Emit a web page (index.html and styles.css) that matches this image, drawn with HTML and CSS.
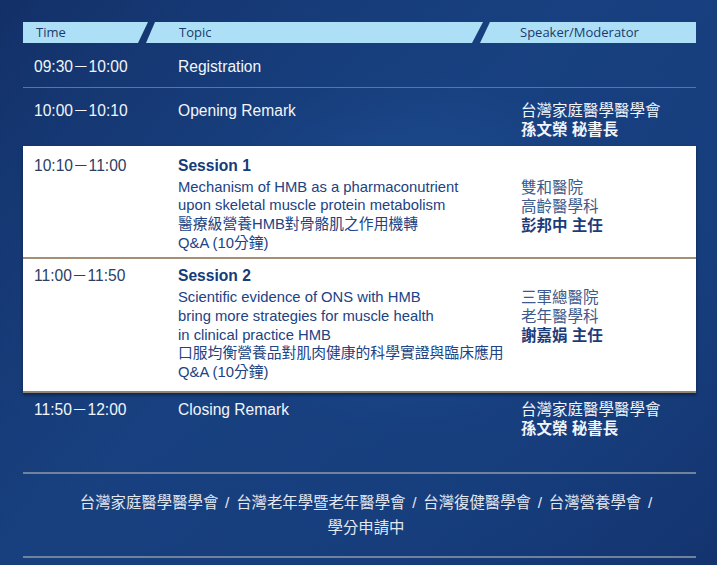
FILE: index.html
```html
<!DOCTYPE html>
<html lang="zh-Hant">
<head>
<meta charset="utf-8">
<title>Agenda</title>
<link rel="stylesheet" href="styles.css">
</head>
<body>
<div class="page">
  <div class="head">
    <div class="seg seg-time">Time</div>
    <div class="seg seg-topic">Topic</div>
    <div class="seg seg-spk">Speaker/Moderator</div>
  </div>

  <div class="row row-first">
    <div class="time">09:30－10:00</div>
    <div class="topic">Registration</div>
    <div class="spk"></div>
  </div>

  <div class="row row-open">
    <div class="time">10:00－10:10</div>
    <div class="topic">Opening Remark</div>
    <div class="spk"><span class="org">台灣家庭醫學醫學會</span><span class="name">孫文榮 秘書長</span></div>
  </div>

  <div class="box">
    <div class="row sess sess-1">
      <div class="time">10:10－11:00</div>
      <div class="topic">
        <div class="title">Session 1</div>
        <span class="ln">Mechanism of HMB as a pharmaconutrient</span>
        <span class="ln">upon skeletal muscle protein metabolism</span>
        <span class="ln">醫療級營養HMB對骨骼肌之作用機轉</span>
        <span class="ln">Q&amp;A (10分鐘)</span>
      </div>
      <div class="spk"><span class="org">雙和醫院</span><span class="org">高齡醫學科</span><span class="name">彭邦中 主任</span></div>
    </div>
    <div class="row sess sess-2">
      <div class="time">11:00－11:50</div>
      <div class="topic">
        <div class="title">Session 2</div>
        <span class="ln">Scientific evidence of ONS with HMB</span>
        <span class="ln">bring more strategies for muscle health</span>
        <span class="ln">in clinical practice HMB</span>
        <span class="ln">口服均衡營養品對肌肉健康的科學實證與臨床應用</span>
        <span class="ln">Q&amp;A (10分鐘)</span>
      </div>
      <div class="spk"><span class="org">三軍總醫院</span><span class="org">老年醫學科</span><span class="name">謝嘉娟 主任</span></div>
    </div>
  </div>

  <div class="row row-close">
    <div class="time">11:50－12:00</div>
    <div class="topic">Closing Remark</div>
    <div class="spk"><span class="org">台灣家庭醫學醫學會</span><span class="name">孫文榮 秘書長</span></div>
  </div>

  <div class="foot">台灣家庭醫學醫學會 / 台灣老年學暨老年醫學會 / 台灣復健醫學會 / 台灣營養學會 /<br>學分申請中</div>
</div>
</body>
</html>
```

FILE: styles.css
```css
html, body {
  margin: 0;
  padding: 0;
}
body {
  width: 717px;
  height: 565px;
  overflow: hidden;
  background: radial-gradient(ellipse 75% 80% at 58% 45%, #1d4d94 0%, #18428366 40%, rgba(0,0,0,0) 100%), linear-gradient(135deg, #132f66 0%, #18407f 45%, #163b79 75%, #13326c 100%);
  font-family: "Liberation Sans", "Noto Sans CJK TC", sans-serif;
  color: #f2f5fa;
}
.page {
  width: 673px;
  padding: 22px 0 0 23px;
}
.head {
  display: flex;
  height: 21px;
}
.seg {
  background: #ade0f7;
  color: #1c3a6c;
  font-family: "Open Sans", "Noto Sans", sans-serif;
  font-size: 13px;
  line-height: 21px;
  height: 21px;
  box-sizing: border-box;
}
.seg-time {
  width: 125px;
  padding-left: 13px;
  clip-path: polygon(0 0, 100% 0, calc(100% - 10px) 100%, 0 100%);
}
.seg-topic {
  width: 337px;
  margin-left: -2px;
  padding-left: 33px;
  clip-path: polygon(9px 0, 100% 0, calc(100% - 11px) 100%, 0 100%);
}
.seg-spk {
  width: 216px;
  margin-left: -3px;
  padding-left: 40px;
  clip-path: polygon(10px 0, 100% 0, 100% 100%, 0 100%);
}
.row {
  display: grid;
  grid-template-columns: 144px 343px 1fr;
  padding-left: 11px;
  font-size: 15.6px;
  line-height: 19px;
}
.spk {
  display: flex;
  flex-direction: column;
  font-size: 15.5px;
  line-height: 19px;
}
.name {
  font-weight: bold;
}
.row-first {
  padding-top: 13.5px;
  padding-bottom: 11.5px;
  border-bottom: 1px solid #7c7064;
}
.row-open {
  padding-top: 12.5px;
  padding-bottom: 7.5px;
}
.box {
  background: #ffffff;
  border-bottom: 2px solid #8f8676;
  box-shadow: 0 2px 3px rgba(5, 15, 40, 0.55);
}
.sess .time {
  color: #2c3e63;
}
.sess .topic {
  color: #214283;
  font-size: 14.8px;
}
.sess .title {
  font-weight: bold;
  color: #163a7a;
  font-size: 15.6px;
  line-height: 19px;
  margin-bottom: 3px;
}
.sess .ln {
  display: block;
  line-height: 18.7px;
}
.sess .spk {
  margin-top: 22px;
}
.sess .org {
  color: #3d5a8c;
}
.sess .name {
  color: #1b3c7a;
}
.sess-1 {
  padding-top: 9.5px;
  padding-bottom: 4.5px;
  border-bottom: 2px solid #a48f74;
}
.sess-2 {
  padding-top: 7.5px;
  padding-bottom: 9px;
}
.row-close {
  padding-top: 7.5px;
  padding-bottom: 33.5px;
  border-bottom: 2px solid #71839a;
}
.foot {
  text-align: center;
  padding: 16.5px 0 16px 13px;
  font-family: "Liberation Sans", "Noto Sans CJK TC", sans-serif;
  font-size: 15.4px;
  line-height: 25px;
  color: #e3e8f0;
  word-spacing: 2.5px;
  border-bottom: 2px solid #71839a;
}
```
